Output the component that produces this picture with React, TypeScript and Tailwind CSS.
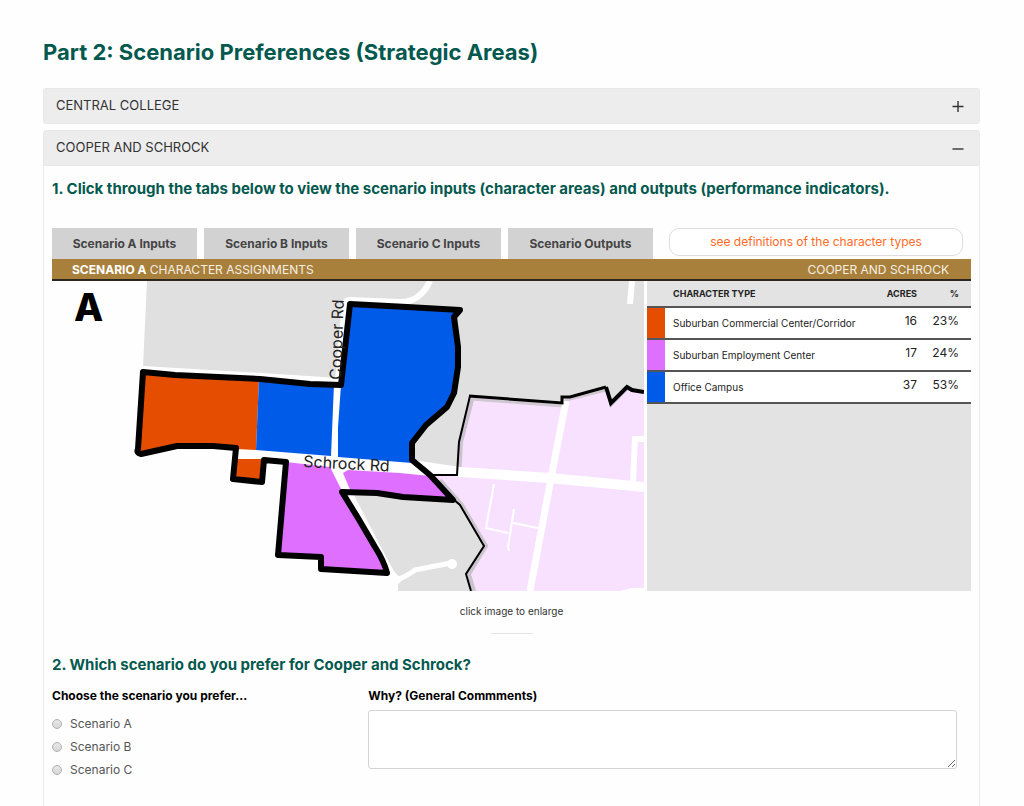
import React from "react";
import { clsx } from "clsx";

type CharacterType = {
  name: string
  acres: number
  percent: string
  color: string
}

const characterTypes: CharacterType[] = [
  { name: "Suburban Commercial Center/Corridor", acres: 16, percent: "23%", color: "bg-[#e54d00]" },
  { name: "Suburban Employment Center", acres: 17, percent: "24%", color: "bg-[#df70ff]" },
  { name: "Office Campus", acres: 37, percent: "53%", color: "bg-[#005be8]" },
]

const tabs = ["Scenario A Inputs", "Scenario B Inputs", "Scenario C Inputs", "Scenario Outputs"]
const scenarios = ["Scenario A", "Scenario B", "Scenario C"]

function AccordionHeader({ title, open }: { title: string, open: boolean }) {
  return (
    <button
      type="button"
      aria-expanded={open}
      className={clsx(
        "flex h-9 w-full items-center justify-between border border-[#e8e8e8] bg-[#ededed] pr-[15px] pl-3 text-[13px] text-[#333]",
        open ? "rounded-t-[3px]" : "rounded-[3px]"
      )}
    >
      <span>{title}</span>
      <svg viewBox="0 0 12 12" className="size-3" stroke="#333" strokeWidth="1.4" aria-hidden="true">
        <path d={open ? "M0.5 7H11.5" : "M0.5 6.5H11.5M6 1V12"} />
      </svg>
    </button>
  )
}

function ScenarioMap() {
  return (
    <svg viewBox="52 281 592 310" className="block h-auto w-full" role="img" aria-label="Scenario A map">
      <rect x="52" y="281" width="592" height="310" fill="#fefefe" />
      <path d="M147 281H644V591H398V580L355 497L340 470L340 379L262 375L143 367Z" fill="#e0e0e0" />

      {/* roads north of the study area */}
      <g fill="none" stroke="#fff" strokeLinejoin="round">
        <path d="M143 369L262 376L338 381L345 304Q346 300 350 300L398 302Q420 303 430 281" strokeWidth="6" />
        <path d="M632 281L630 304" strokeWidth="6" />
      </g>

      {/* neighbouring area */}
      <path
        d="M470 396L562 403V397L570 397L606 387L611 404L627 386L632 390L644 392V591H472L467 574L485 546L460 505L430 472L457 476L459 442Z"
        fill="#f8e1ff"
      />
      <path d="M472 400L461 442L459 477" fill="none" stroke="#c9c3cb" strokeWidth="4" />
      <path d="M471 399L562 406L566 400L606 390" fill="none" stroke="#cfc8d0" strokeWidth="3" />
      <path d="M440 480L462 505L486 546L469 574L474 591" fill="none" stroke="#c9c3cb" strokeWidth="4" />
      <path d="M608 391L611 405L627 389" fill="none" stroke="#c9c3cb" strokeWidth="3" />
      <g fill="none" stroke="#fff">
        <path d="M412 465L460 472L550 478L644 487" strokeWidth="10" />
        <path d="M566 401L552 473L530 591" strokeWidth="7" />
        <path d="M644 439H635L633 482" strokeWidth="6" />
        <path d="M494 484L486 528L508 533" strokeWidth="2" />
        <path d="M514 509L508 547L509 551M513 523L538 528" strokeWidth="2" />
      </g>
      <path d="M620 591L632 588H644V591Z" fill="#fff" />
      <path d="M430 475H457L459 442L470 396" fill="none" stroke="#000" strokeWidth="2" />
      <path d="M469 396L562 403V397L570 397L606 387" fill="none" stroke="#000" strokeWidth="3" />
      <path d="M606 387L611 403L627 387L632 390L644 392" fill="none" stroke="#000" strokeWidth="4" />
      <path d="M453 499L460 505L484 546L466 574L471 591" fill="none" stroke="#000" strokeWidth="2" />

      {/* study area */}
      <path
        d="M143 372L341 385L350 304L460 310L454 317L458 347L458 367L454 393L447 407L426 425L412 443V460L453 500L403 497L342 492L387 573L321 569V557L278 555L286 462L264 460L262 482L233 479L236 448L139 454Z"
        fill="#fff"
      />
      <path d="M143 372L259 379L256 450L236 449L213 446H177L139 454Z" fill="#e54d00" />
      <path d="M236 459H263L262 482L233 479Z" fill="#e54d00" />
      <path d="M259 379L334 384L332 432L331 456L256 450Z" fill="#005be8" />
      <path
        d="M341 385L350 304L460 310L454 317L458 347L458 367L454 393L447 407L426 425L412 443V463L338 457V427Z"
        fill="#005be8"
      />
      <path d="M286 462L330 467L342 491L387 573L321 569V557L278 555Z" fill="#df70ff" />
      <path d="M351 492L343 473L348 470L400 473L430 476L453 500L403 497L377 493Z" fill="#df70ff" />

      <g fill="none" stroke="#fff" strokeLinecap="round">
        <path d="M348 499L391 574L397 580" strokeWidth="8" />
        <path d="M396 580Q406 577 415 570Q430 567 451 563" strokeWidth="5" />
      </g>
      <circle cx="452" cy="564" r="5" fill="#fff" />

      {/* the inside corner by the diagonal road */}
      <path d="M342 492L358 518L375 547Q384 561 387 573L350 560V510Z" fill="#df70ff" />

      <path
        d="M143 372L175 375L260 379L310 384L341 385L350 304L407 307L460 310L454 317L458 347L458 367L454 393L447 407L426 425L412 443V460L430 475L453 500L403 497L377 493L342 492L358 518L375 547Q384 561 387 573L321 569V557L278 555L286 462L264 460L262 482L233 479L236 448L213 446H177L141 454Q136 453 138 449Z"
        fill="none"
        stroke="#000"
        strokeWidth="6"
        strokeLinejoin="round"
      />

      <g fontFamily="Inter, 'Liberation Sans', sans-serif">
        <text x="74" y="321" fontSize="38" fontWeight="800" fill="#000">A</text>
        <text transform="translate(341 380) rotate(-88)" fontSize="16" fill="#222">Cooper Rd</text>
        <text transform="translate(303 467) rotate(3)" fontSize="16" fill="#222">Schrock Rd</text>
      </g>
    </svg>
  )
}

function LegendTable() {
  return (
    <div className="bg-[#e3e3e3]">
      <table className="w-full border-collapse text-[#222]">
        <thead>
          <tr className="h-[26px] border-b-2 border-[#555] text-[9px] font-bold">
            <th className="w-[18px]"></th>
            <th className="pl-2 text-left">CHARACTER TYPE</th>
            <th className="w-14 text-right">ACRES</th>
            <th className="w-[54px] pr-3 text-right">%</th>
          </tr>
        </thead>
        <tbody>
          {characterTypes.map(type => (
            <tr key={type.name} className="h-8 border-b-2 border-[#555] bg-white">
              <td className={type.color}></td>
              <td className="pl-2 text-[10px] whitespace-nowrap">{type.name}</td>
              <td className="pb-1 text-right text-xs">{type.acres}</td>
              <td className="pr-3 pb-1 text-right text-xs">{type.percent}</td>
            </tr>
          ))}
        </tbody>
      </table>
    </div>
  )
}

export default function App() {
  const [scenario, setScenario] = React.useState<string | null>(null)

  return (
    <main className="min-h-screen bg-[#fefefe] pt-9 pr-11 pl-[43px] font-[Inter,'Liberation_Sans',sans-serif]">
      <h1 className="text-[22px] leading-8 font-bold text-[#04594f]">
        Part 2: Scenario Preferences (Strategic Areas)
      </h1>

      <div className="mt-5">
        <AccordionHeader title="CENTRAL COLLEGE" open={false} />
      </div>

      <section className="mt-1.5">
        <AccordionHeader title="COOPER AND SCHROCK" open={true} />
        <div className="border-x border-[#ececec] px-2 pt-[13px] pb-8">
          <h2 className="text-[15px] leading-5 font-bold text-[#04594f]">
            1. Click through the tabs below to view the scenario inputs (character areas) and outputs (performance indicators).
          </h2>

          <div className="mt-[29px] grid grid-cols-[601fr_318fr]">
            <div role="tablist" className="flex gap-[7px]">
              {tabs.map((tab, i) => (
                <button
                  key={tab}
                  type="button"
                  role="tab"
                  aria-selected={i === 0}
                  className="h-[31px] flex-1 bg-[#d2d2d2] text-xs font-bold text-[#444]"
                >
                  {tab}
                </button>
              ))}
            </div>
            <div className="pr-2 pl-4">
              <button
                type="button"
                className="h-7 w-full rounded-[10px] border border-[#ddd] bg-white text-xs text-[#ff6a1f]"
              >
                see definitions of the character types
              </button>
            </div>
          </div>

          <div className="flex h-[22px] items-center justify-between border-b-2 border-[#2b2620] bg-[#a9803b] pt-0.5 pr-[22px] pl-5 text-xs text-[#f5efe4]">
            <span><b className="text-white">SCENARIO A</b> CHARACTER ASSIGNMENTS</span>
            <span>COOPER AND SCHROCK</span>
          </div>
          <div className="grid grid-cols-[592fr_324fr] gap-[3px]">
            <ScenarioMap />
            <LegendTable />
          </div>

          <p className="mt-3 text-center text-[10px] leading-4 text-[#333]">click image to enlarge</p>
          <hr className="mx-auto mt-3.5 w-[42px] border-[#e4e4e4]" />

          <h2 className="mt-[21px] text-[15px] leading-5 font-bold text-[#04594f]">
            2. Which scenario do you prefer for Cooper and Schrock?
          </h2>

          <div className="mt-[13px] grid grid-cols-[316fr_588fr_14fr]">
            <fieldset>
              <legend className="text-xs leading-4 font-bold text-black">Choose the scenario you prefer...</legend>
              <div className="mt-2">
                {scenarios.map(name => (
                  <label key={name} className="flex h-[23px] items-center gap-2 text-xs text-[#555]">
                    <input
                      type="radio"
                      name="scenario"
                      value={name}
                      checked={scenario === name}
                      onChange={() => setScenario(name)}
                      className="size-2.5 appearance-none rounded-full border border-[#b0b0b0] bg-linear-to-b from-[#e8e8e8] to-[#d6d6d6] checked:bg-[#555]"
                    />
                    {name}
                  </label>
                ))}
              </div>
            </fieldset>
            <div>
              <label htmlFor="comments" className="block text-xs leading-4 font-bold text-black">
                Why? (General Commments)
              </label>
              <textarea
                id="comments"
                className="mt-1.5 block h-[59px] w-full rounded-[3px] border border-[#d4d4d4] bg-white p-2 text-xs"
              />
            </div>
          </div>
        </div>
      </section>
    </main>
  )
}
